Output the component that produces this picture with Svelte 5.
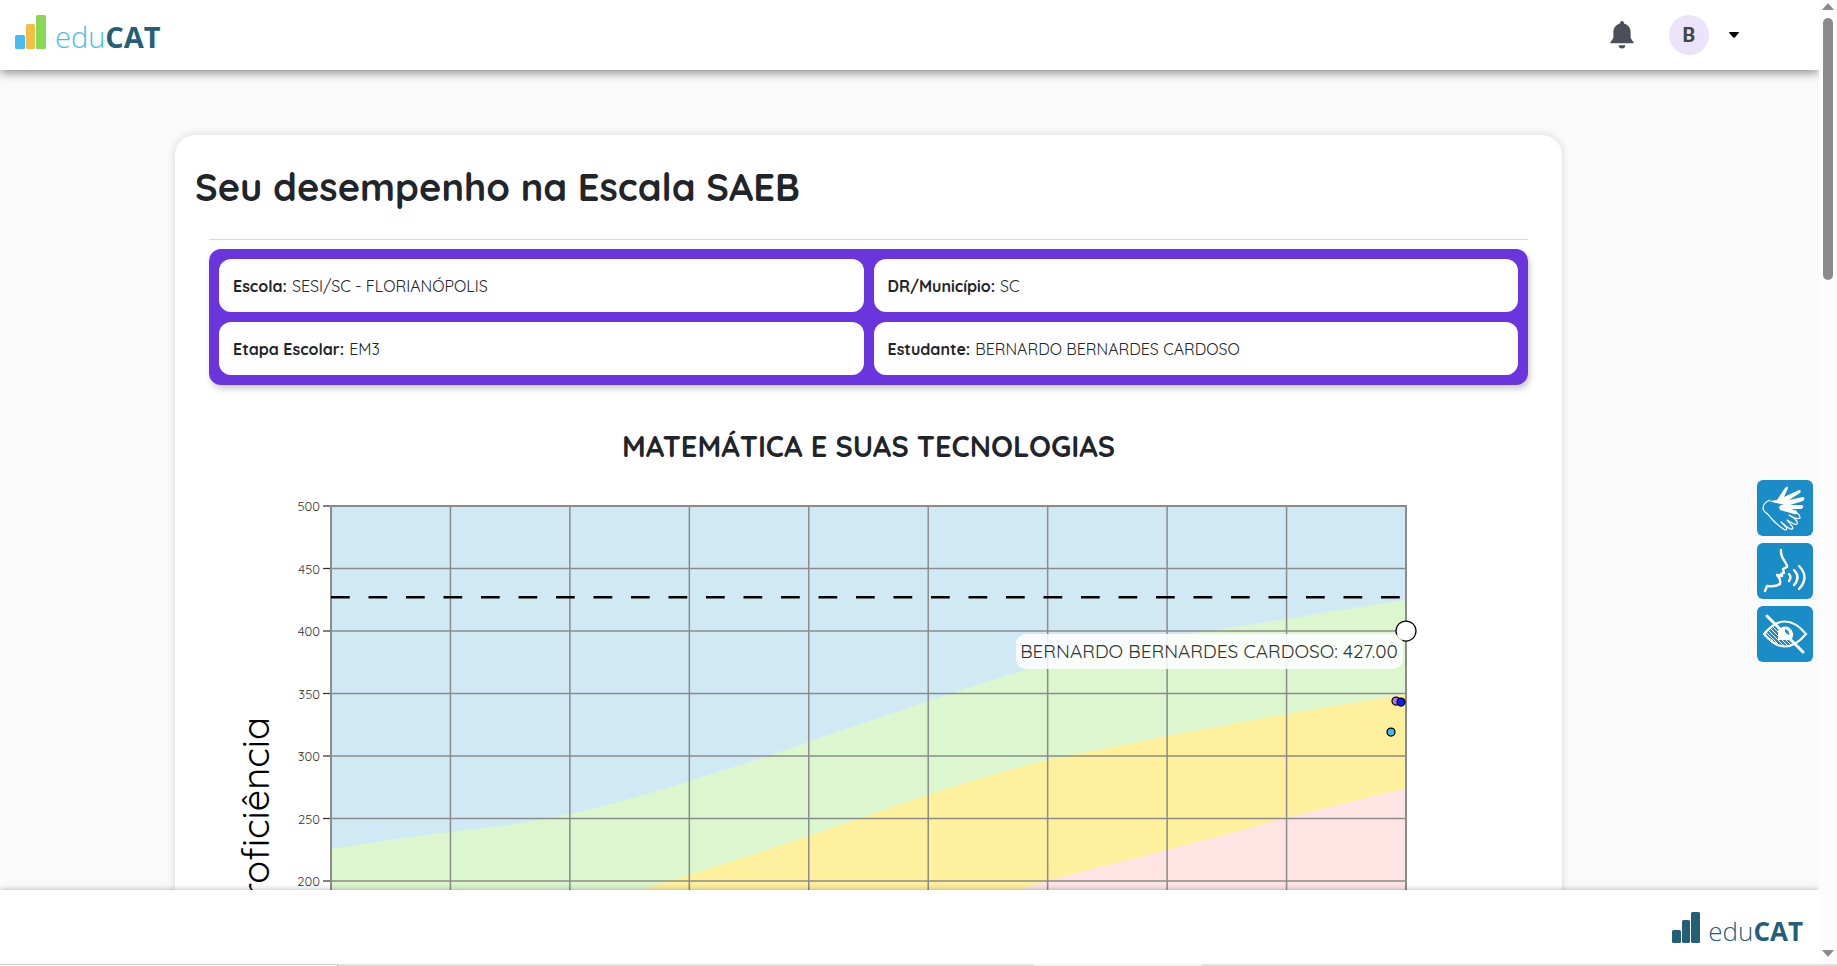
<script>
  const rows = [
    { label: 'Escola:', value: 'SESI/SC - FLORIANÓPOLIS' },
    { label: 'DR/Município:', value: 'SC' },
    { label: 'Etapa Escolar:', value: 'EM3' },
    { label: 'Estudante:', value: 'BERNARDO BERNARDES CARDOSO' }
  ];

  // Plot area inside the chart's own coordinate system
  const left = 122;
  const right = 1197;
  const top = 20;
  const bottom = 645;
  const y = (v) => top + (500 - v) * 1.25;
  const ticks = [500, 450, 400, 350, 300, 250, 200];
  const columns = Array.from({ length: 10 }, (_, i) => left + (i * (right - left)) / 9);

  // Upper edges of the coloured bands
  const bands = [
    { fill: '#dcf6cf', pts: [[122, 363], [180, 354], [241, 346], [300, 339], [361, 328], [420, 313], [480, 295], [540, 276], [599, 256], [660, 235], [719, 215], [780, 195], [838, 178], [898, 163], [958, 152], [1018, 142], [1077, 133], [1137, 123], [1197, 114]] },
    { fill: '#fff09e', pts: [[122, 490], [241, 458], [361, 424], [431, 404], [480, 389], [540, 370], [599, 350], [660, 329], [719, 309], [780, 290], [838, 274], [898, 262], [958, 250], [1018, 239], [1077, 228], [1137, 218], [1197, 208]] },
    { fill: '#ffe4e4', pts: [[122, 580], [361, 525], [599, 465], [719, 431], [780, 413], [838, 395], [898, 379], [958, 364], [1018, 348], [1077, 332], [1137, 317], [1197, 302]] }
  ];

  // Smooth path through the points of a band, closed along the bottom axis
  function area(pts) {
    let d = `M${left} ${bottom} L${pts[0][0]} ${pts[0][1]}`;
    for (let i = 0; i < pts.length - 1; i++) {
      const a = pts[Math.max(i - 1, 0)];
      const b = pts[i];
      const c = pts[i + 1];
      const e = pts[Math.min(i + 2, pts.length - 1)];
      d += ` C${b[0] + (c[0] - a[0]) / 6} ${b[1] + (c[1] - a[1]) / 6} ${c[0] - (e[0] - b[0]) / 6} ${c[1] - (e[1] - b[1]) / 6} ${c[0]} ${c[1]}`;
    }
    return d + ` L${right} ${bottom} Z`;
  }
</script>

<div class="screen">
  <div class="app">
    <header>
      <a class="brand" href="#inicio" aria-label="eduCAT">
        <svg width="32" height="35" viewBox="0 0 32 35" aria-hidden="true">
          <rect x="0" y="20" width="10" height="14" rx="1.500" fill="#45bdf0" />
          <rect x="11" y="9" width="9" height="25" rx="1.500" fill="#f4bd45" />
          <rect x="21" y="0" width="10" height="34" rx="1.500" fill="#85d955" />
        </svg>
        <span class="word"><span class="edu">edu</span><b>CAT</b></span>
      </a>
      <div class="tools">
        <button class="plain" aria-label="Notificações">
          <svg width="24" height="28" viewBox="0 0 24 28">
            <path d="M12 0a2 2 0 0 0-2 2v.5C6 3.500 3.400 7 3.400 11v4.500c0 2-.9 3.300-2.600 5-.8.900-.6 1.800.4 1.800h21.600c1 0 1.200-.9.400-1.800-1.700-1.700-2.600-3-2.600-5V11c0-4-2.600-7.500-6.600-8.500V2a2 2 0 0 0-2-2zM8.800 24.200a3.200 3.200 0 0 0 6.400 0z" fill="#4b4f5a" />
          </svg>
        </button>
        <button class="plain user" aria-label="Menu do usuário">
          <span class="avatar">B</span>
          <svg width="10" height="6" viewBox="0 0 10 6"><path d="M.5 0h9q.8.200.2 1L5.800 5.400q-.8.700-1.600 0L.3 1Q-.3.200.5 0z" /></svg>
        </button>
      </div>
    </header>

    <main>
      <section class="card">
        <h1>Seu desempenho na Escala SAEB</h1>
        <hr />
        <dl>
          {#each rows as row}
            <div class="cell"><dt>{row.label}</dt><dd>{row.value}</dd></div>
          {/each}
        </dl>
        <h2>MATEMÁTICA E SUAS TECNOLOGIAS</h2>
        <svg class="chart" viewBox="0 0 1319 700" role="img" aria-label="Proficiência em matemática">
          <rect x={left} y={top} width={right - left} height={bottom - top} fill="#d1e9f5" />
          {#each bands as band}
            <path d={area(band.pts)} fill={band.fill} />
          {/each}
          {#each ticks as t}
            <line x1={left - 8} x2={left} y1={y(t)} y2={y(t)} stroke="#333" stroke-width="1.250" />
            <line x1={left} x2={right} y1={y(t)} y2={y(t)} stroke="#8b8b8b" stroke-width="1.500" />
            <text class="tick" x={left - 11} y={y(t) + 5}>{t}</text>
          {/each}
          {#each columns as x}
            <line x1={x} x2={x} y1={top} y2={bottom} stroke="#8b8b8b" stroke-width="1.500" />
          {/each}
          <rect x={left} y={top} width={right - left} height={bottom - top} fill="none" stroke="#8b8b8b" stroke-width="2" />
          <line x1={left} x2={right} y1={y(427)} y2={y(427)} stroke="#000" stroke-width="2.500" stroke-dasharray="18.750" />
          <circle cx="1197" cy="145" r="10" fill="#fff" stroke="#000" stroke-width="1.250" />
          <rect x="807" y="148" width="387" height="35" rx="10" fill="#fff" fill-opacity=".85" />
          <text class="student" x="1000" y="172">BERNARDO BERNARDES CARDOSO: 427.00</text>
          <circle cx="1187" cy="215" r="4" fill="#b476ea" stroke="#000" stroke-width="1.250" />
          <circle cx="1192" cy="216" r="4" fill="#0f1cff" stroke="#000" stroke-width="1.250" />
          <circle cx="1182" cy="246" r="4" fill="#3db8f0" stroke="#000" stroke-width="1.250" />
          <text class="axis" transform="translate(60 231) rotate(-90)">Proficiência</text>
        </svg>
      </section>
    </main>

    <footer>
      <a class="brand mono" href="#inicio" aria-label="eduCAT">
        <svg width="28" height="31" viewBox="0 0 28 31" aria-hidden="true" fill="#245f7a">
          <rect x="0" y="18" width="9" height="13" rx="1.500" />
          <rect x="10" y="8" width="8" height="23" rx="1.500" />
          <rect x="19" y="0" width="9" height="31" rx="1.500" />
        </svg>
        <span class="word"><span class="edu">edu</span><b>CAT</b></span>
      </a>
    </footer>

    <aside>
      <button aria-label="Libras">
        <svg width="56" height="56" viewBox="0 0 56 56">
          <path d="M12 21l8-1 8-12q3-3 3 0l-4 9 15-7q3 0 1 3l-11 7 14-3q3 1 0 4l-13 4 12 0q3 2-1 4l-9 0 5 3q1 3-3 2l-14-4-1-3q2-3 6-3-8 0-16-3z" fill="#fff" />
          <path d="M13 20q-7 3-7 8l1 3q4 3 7 7 6 7 14 12 3 0 1-3l-5-5q9 8 11 7 2-1-1-4l-4-5q9 6 10 4 1-2-2-5l-6-4q9 5 11 3 0-3-3-5l-2-3" fill="none" stroke="#fff" stroke-width="1.200" stroke-linejoin="round" />
        </svg>
      </button>
      <button aria-label="Voz">
        <svg width="56" height="56" viewBox="0 0 56 56" fill="none" stroke="#fff" stroke-width="2.400" stroke-linejoin="round" stroke-linecap="round">
          <path d="M24 7c-1 9 7 13 6 17l-4 2 1 4-3 1 1 2-5-1q4 4 3 9-4 3-13 2l-2 5" />
          <path d="M32 31q3 3 0 7M37 27q7 7 0 15M42 23q11 11 0 23" />
        </svg>
      </button>
      <button aria-label="Alto contraste">
        <svg width="56" height="56" viewBox="0 0 56 56" fill="none" stroke="#fff">
          <path d="M9 26l12 12M11 24l16 16M13 22l18 18M15 20l19 19M8 29l8 6" stroke-width="1" />
          <path d="M7 28Q28 3 49 28Q28 53 7 28z" stroke-width="2.200" />
          <path d="M21 34V25a8 8 0 1 1 13 9z" fill="#fff" stroke="none" />
          <path d="M28 23a5 5 0 0 1 4 6l-4-2z" fill="#1a8cc8" stroke="none" />
          <path d="M10 10l36 36" stroke-width="3" stroke-linecap="round" />
        </svg>
      </button>
    </aside>
  </div>

  <div class="scroll" aria-hidden="true">
    <span class="up"></span>
    <span class="thumb"></span>
    <span class="down"></span>
  </div>
  <div class="edge"><span class="status"></span><span class="mid"></span></div>
</div>

<style>
  :global(body) { background: #fafafa; }
  .screen {
    display: grid;
    grid-template-columns: 1fr 18px;
    grid-template-rows: 1fr 2px;
    height: 100vh;
    overflow: hidden;
    font-family: Quicksand, Lato, sans-serif;
    color: #212529;
  }
  .app { position: relative; display: flex; flex-direction: column; min-width: 0; min-height: 0; overflow: hidden; }
  header {
    position: relative;
    z-index: 1;
    flex: none;
    display: flex;
    align-items: center;
    justify-content: space-between;
    box-sizing: border-box;
    height: 70px;
    padding: 0 80px 0 15px;
    background: #fff;
    box-shadow: 0 2px 10px rgba(0, 0, 0, .5);
  }
  .brand { display: flex; align-items: flex-end; gap: 8px; text-decoration: none; color: #245f7a; }
  header .brand { margin-bottom: 5px; }
  .word { font: 29px/26px "Open Sans", sans-serif; }
  .edu { font-weight: 300; }
  header .edu { color: #45bdf0; }
  .word b { font-weight: 700; }
  .mono .word { font-size: 26px; line-height: 23px; }
  .tools { display: flex; align-items: center; gap: 35px; }
  .plain { display: flex; align-items: center; padding: 0; border: 0; background: none; }
  .user { gap: 20px; }
  .avatar { width: 40px; border-radius: 50%; background: #ebe3fa; color: #444; font: 700 20px/40px Roboto, sans-serif; text-align: center; }
  main { flex: 1; min-height: 0; overflow: hidden; padding: 65px 257px 0 175px; background: #fafafa; }
  .card { box-sizing: border-box; padding: 28px 34px 0; border-radius: 20px; background: #fff; box-shadow: 0 0 8px rgba(0, 0, 0, .15); }
  h1 { margin: 0 -14px; font-size: 38px; line-height: 48px; font-weight: 700; }
  hr { height: 1px; margin: 28px 0 9px; border: 0; background: #d8d8d8; }
  dl {
    display: grid;
    grid-template-columns: 1fr 1fr;
    gap: 10px;
    margin: 0;
    padding: 10px;
    border-radius: 12px;
    background: #6a35dc;
    box-shadow: 2px 4px 6px rgba(0, 0, 0, .2);
  }
  .cell { display: flex; gap: 5px; padding: 15px 14px 14px; border-radius: 12px; background: #fff; font-size: 16px; line-height: 24px; }
  dt { font-weight: 700; }
  dd { margin: 0; font-weight: 400; }
  h2 { margin: 43px 0 22px; font-size: 29px; line-height: 36px; font-weight: 700; text-align: center; }
  .chart { display: block; width: 100%; }
  .tick { font-size: 13px; font-weight: 400; text-anchor: end; fill: #333; }
  .student { font-size: 19px; font-weight: 400; text-anchor: middle; fill: #333; }
  .axis { font-size: 38px; text-anchor: end; fill: #000; }
  footer {
    position: relative;
    z-index: 1;
    flex: none;
    display: flex;
    align-items: center;
    justify-content: flex-end;
    height: 74px;
    padding-right: 16px;
    background: #fff;
    box-shadow: 0 0 6px rgba(0, 0, 0, .3);
  }
  .edge { grid-column: 1 / -1; display: flex; justify-content: space-between; padding-right: 635px; background: #e1e1e1; }
  .status { box-sizing: border-box; width: 338px; border-top: 1px solid #c8c8c8; border-right: 1px solid #c8c8c8; background: #fff; }
  .mid { width: 168px; background: #f3f3f3; }
  aside { position: absolute; z-index: 2; top: 480px; right: 6px; display: flex; flex-direction: column; gap: 7px; }
  aside button { width: 56px; height: 56px; padding: 0; border: 0; border-radius: 6px; background: #1a8cc8; }
  aside svg { display: block; }
  .scroll { display: flex; flex-direction: column; align-items: center; box-sizing: border-box; padding: 3px 0; background: #fcfcfc; }
  .up { border: 6px solid transparent; border-top: 0; border-bottom: 7px solid #8b8b8b; }
  .thumb { width: 10px; height: 262px; margin-top: 8px; border-radius: 5px; background: #8b8b8b; }
  .down { margin-top: auto; margin-bottom: 4px; border: 6px solid transparent; border-bottom: 0; border-top: 7px solid #8b8b8b; }
</style>
